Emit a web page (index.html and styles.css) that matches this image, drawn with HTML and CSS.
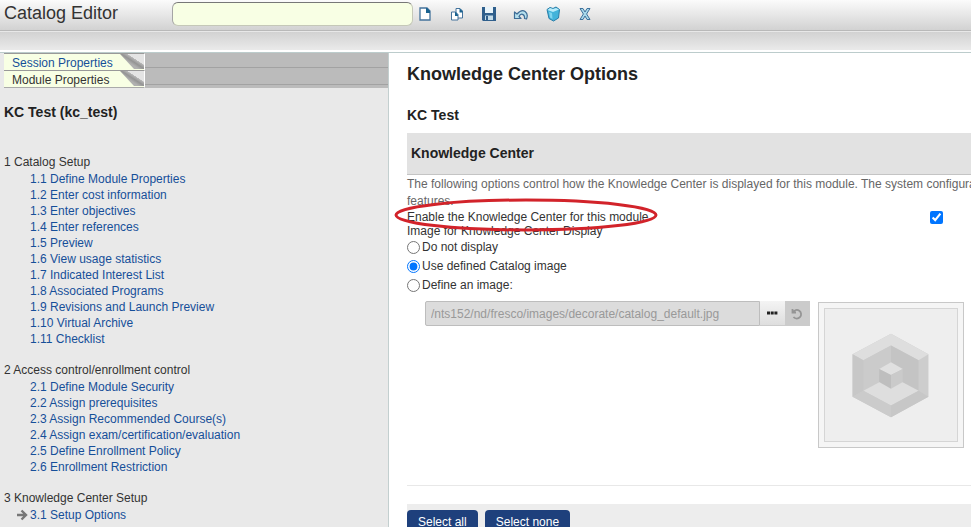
FILE: index.html
```
<!DOCTYPE html>
<html lang="en">
<head>
    <meta charset="UTF-8">
    <meta name="viewport" content="width=device-width, initial-scale=1.0">
    <title>Catalog Editor</title>
    <link rel="stylesheet" href="styles.css">
</head>
<body>
    <header class="toolbar">
        <div class="app-title">Catalog Editor</div>
        <input class="message" type="text" aria-label="Message" readonly>
        <div class="tools">
            <button type="button" aria-label="New">
                <svg viewBox="0 0 16 16"><path d="M3 2h7l3 3v9H3z" fill="#fff" stroke="#44739c" stroke-width="1.3"/><path d="M9 2h1l3 3v2H9z" fill="#1b6390"/></svg>
            </button>
            <button type="button" aria-label="Copy">
                <svg viewBox="0 0 16 16"><path d="M7 2.500h4l2.500 2.500v7H7z" fill="#fff" stroke="#44739c"/><path d="M10.500 2.500h.5L13.500 5v1.500h-3z" fill="#1b6390"/><path d="M2.500 6h4L9 8.500V14H2.500z" fill="#fff" stroke="#44739c"/><path d="M6 6h.5L9 8.500V10H6z" fill="#1b6390"/></svg>
            </button>
            <button type="button" aria-label="Save">
                <svg viewBox="0 0 16 16"><path d="M1 1h14v14H2l-1-1z" fill="#2f5f8c"/><path d="M4 1h8v6H4z" fill="#e9f4fa"/><path d="M4 9.500h8V14H4z" fill="#c4dce9"/><path d="M5 10h2v4H5z" fill="#2f5f8c"/></svg>
            </button>
            <button type="button" aria-label="Undo">
                <svg viewBox="0 0 16 16"><path d="M1.500 6v6.500H8L6 10.500C7.500 7 12 7.500 11.500 12.500l2 .5C16 7 10.500 .500 4 8z" fill="#b5dfed" stroke="#3d6c96" stroke-width="1.200" stroke-linejoin="round"/></svg>
            </button>
            <button type="button" aria-label="Delete">
                <svg viewBox="0 0 16 16"><path d="M2 3.500 5 1.500l3 1 3-1.500 3.500 2.500-1 8.500L8.500 15 4 12.500z" fill="#43b3da" stroke="#287da8"/><path d="M2.500 4 8 6l6-2.500L11 2 8 3 5 2z" fill="#b9ecfa"/><path d="M4 6l3 1 .500 6-2.500-1.500z" fill="#80d5ef"/></svg>
            </button>
            <button type="button" aria-label="Close">
                <svg viewBox="0 0 16 16"><path d="M3 2.500h3L8 6l2-3.500h3L9.600 8l3.400 5.500h-3L8 10l-2 3.500H3L6.400 8z" fill="#a8d8ea" stroke="#3d719c"/></svg>
            </button>
        </div>
    </header>
    <div class="subbar"></div>
    <div class="page">
        <aside class="sidebar">
            <div class="tabs">
                <div class="tab"><a href="#">Session Properties</a></div>
                <div class="tab"><span>Module Properties</span></div>
            </div>
            <h2 class="module-name">KC Test (kc_test)</h2>
            <nav>
                <div class="group">
                    <h3>1 Catalog Setup</h3>
                    <ul>
                        <li><a href="#">1.1 Define Module Properties</a></li>
                        <li><a href="#">1.2 Enter cost information</a></li>
                        <li><a href="#">1.3 Enter objectives</a></li>
                        <li><a href="#">1.4 Enter references</a></li>
                        <li><a href="#">1.5 Preview</a></li>
                        <li><a href="#">1.6 View usage statistics</a></li>
                        <li><a href="#">1.7 Indicated Interest List</a></li>
                        <li><a href="#">1.8 Associated Programs</a></li>
                        <li><a href="#">1.9 Revisions and Launch Preview</a></li>
                        <li><a href="#">1.10 Virtual Archive</a></li>
                        <li><a href="#">1.11 Checklist</a></li>
                    </ul>
                </div>
                <div class="group">
                    <h3>2 Access control/enrollment control</h3>
                    <ul>
                        <li><a href="#">2.1 Define Module Security</a></li>
                        <li><a href="#">2.2 Assign prerequisites</a></li>
                        <li><a href="#">2.3 Assign Recommended Course(s)</a></li>
                        <li><a href="#">2.4 Assign exam/certification/evaluation</a></li>
                        <li><a href="#">2.5 Define Enrollment Policy</a></li>
                        <li><a href="#">2.6 Enrollment Restriction</a></li>
                    </ul>
                </div>
                <div class="group">
                    <h3>3 Knowledge Center Setup</h3>
                    <ul>
                        <li class="current">
                            <svg class="arrow" viewBox="0 0 12 12"><path d="M1 6h9M5.500 1.500 10 6l-4.500 4.500" fill="none" stroke="#777" stroke-width="2.400"/></svg>
                            <a href="#">3.1 Setup Options</a>
                        </li>
                    </ul>
                </div>
            </nav>
        </aside>
        <main class="content">
            <h1>Knowledge Center Options</h1>
            <h2 class="subject">KC Test</h2>
            <h2 class="section-bar">Knowledge Center</h2>
            <form>
                <p class="intro">The following options control how the Knowledge Center is displayed for this module. The system configuration<br>features.</p>
                <div class="enable-row">
                    <label for="enable">Enable the Knowledge Center for this module</label>
                    <input type="checkbox" id="enable" checked>
                    <svg class="marker" viewBox="0 0 264 36" aria-hidden="true"><ellipse cx="132" cy="18" rx="130" ry="15" fill="none" stroke="#d2232a" stroke-width="3"/></svg>
                </div>
                <div class="image-label">Image for Knowledge Center Display</div>
                <div class="choice"><input type="radio" name="image" id="img-none"><label for="img-none">Do not display</label></div>
                <div class="choice"><input type="radio" name="image" id="img-catalog" checked><label for="img-catalog">Use defined Catalog image</label></div>
                <div class="choice"><input type="radio" name="image" id="img-custom"><label for="img-custom">Define an image:</label></div>
                <div class="picker">
                    <input class="path" type="text" aria-label="Image path" value="/nts152/nd/fresco/images/decorate/catalog_default.jpg" disabled>
                    <button class="browse" type="button" aria-label="Browse">
                        <svg viewBox="0 0 12 12"><path d="M1 4.500h3v3H1zM4.700 4.500h3v3h-3zM8.400 4.500h3v3h-3z" fill="#222"/></svg>
                    </button>
                    <button class="reset" type="button" aria-label="Reset" disabled>
                        <svg viewBox="0 0 12 12"><path d="M1.500 1v3.500H5M2 4.200A4.300 4.300 0 1 1 2.500 9" fill="none" stroke="#959595" stroke-width="1.800"/></svg>
                    </button>
                    <div class="preview">
                        <svg viewBox="0 0 134 134">
                            <path d="M67 25 105 46v43L67 110 28 89V46z" fill="#cdcdcd"/>
                            <path d="M67 25 105 46 95 52 67 37 39 52 28 46z" fill="#dedede"/>
                            <path d="M39 52 67 37v45L39 83z" fill="#cbcbcb"/>
                            <path d="M67 37 95 52v31L67 72z" fill="#c4c4c4"/>
                            <path d="M28 46 39 52v31L28 89z" fill="#c7c7c7"/>
                            <path d="M39 83 67 68 95 83 67 98z" fill="#dedede"/>
                            <path d="M67 98v12L28 89l11-6z" fill="#cbcbcb"/>
                            <path d="M67 98v12l38-21-10-6z" fill="#c7c7c7"/>
                            <path d="M55 61 67 54 79 61 67 67z" fill="#e0e0e0"/>
                            <path d="M55 61 67 67v14L55 74z" fill="#bebebe"/>
                            <path d="M67 67 79 61v13L67 81z" fill="#cacaca"/>
                        </svg>
                    </div>
                </div>
                <hr>
                <div class="actions">
                    <button type="button">Select all</button>
                    <button type="button">Select none</button>
                </div>
            </form>
        </main>
    </div>
</body>
</html>
```
FILE: styles.css
```
* {
    box-sizing: border-box;
}
body {
    margin: 0;
    min-height: 100vh;
    display: flex;
    flex-direction: column;
    overflow: hidden;
    font-family: "Liberation Sans", Arial, sans-serif;
    font-size: 12px;
    line-height: 16px;
    color: #333;
    background: #fff;
}
h1, h2, h3, p, ul {
    margin: 0;
    padding: 0;
}
a {
    color: #164f99;
    text-decoration: none;
}
a:hover {
    text-decoration: underline;
}
button {
    padding: 0;
    border: 0;
    font-family: inherit;
    cursor: pointer;
}
svg {
    display: block;
}

/* top bars */
.toolbar {
    display: flex;
    align-items: flex-start;
    height: 31px;
    padding: 2px 4px;
    background: linear-gradient(#fbfbfb, #d2d2d2);
    border-bottom: 1px solid #b9b9b9;
}
.app-title {
    width: 168px;
    font-size: 18px;
    line-height: 22px;
}
.message {
    width: 241px;
    height: 24px;
    padding: 0 6px;
    border: 1px solid #c5c8b8;
    border-top: 1px solid #777;
    border-left: 1px solid #a5a5a5;
    border-radius: 6px;
    background: #f8ffe4;
}
.tools {
    display: flex;
    gap: 12px;
    margin-left: 2px;
    padding-top: 2px;
}
.tools button {
    width: 20px;
    height: 20px;
    padding: 2px;
    background: none;
}
.tools svg {
    width: 16px;
    height: 16px;
}
.subbar {
    height: 21px;
    background: linear-gradient(#d2d2d2, #eaeaea);
    border-top: 1px solid #e8e8e8;
    border-bottom: 2px solid #fff;
}
.page {
    flex: 1;
    display: grid;
    grid-template-columns: 389px minmax(0, 1fr);
    border-top: 1px solid #bccccc;
}

/* left side */
.sidebar {
    background: #e9e9e9;
    border-right: 1px solid #c3cfcf;
}
.tabs {
    margin-left: 4px;
    background: #bbb;
}
.tab {
    height: 17px;
    padding-right: 243px;
    background: linear-gradient(#bbb, #bbb 14px, #a2a2a2 14px, #a2a2a2 15px, #bbb 15px);
}
.tab + .tab {
    height: 18px;
}
.tab a,
.tab span {
    display: block;
    height: 100%;
    padding-left: 8px;
    line-height: 18px;
    border-top: 1px solid #999;
    border-right: 1px solid #fff;
    background: #f8ffe4;
    position: relative;
}
.tab a::after,
.tab span::after {
    content: "";
    position: absolute;
    top: 0;
    right: 0;
    width: 24px;
    height: 15px;
    background: linear-gradient(33deg, #b0b0b0 40%, #949494 52%, #b8b8b8 64%, #e4e4e4 65%);
    clip-path: polygon(0 0, 100% 0, 100% 100%, 14px 100%);
}
.tab span {
    border-bottom: 1px solid #aaa;
}
.module-name {
    margin: 16px 4px 34px;
    font-size: 14px;
    color: #222;
}
.group {
    margin: 0 4px 15px;
}
.group h3 {
    font-size: 12px;
    font-weight: normal;
    line-height: 16px;
    margin-bottom: 1px;
}
.group ul {
    padding-left: 26px;
    list-style: none;
}
.current {
    display: flex;
    align-items: center;
    gap: 2px;
    margin-left: -14px;
}
.arrow {
    width: 12px;
    height: 12px;
}

/* right side */
.content {
    padding: 11px 0 0 18px;
    overflow: hidden;
}
.content h1 {
    font-size: 18px;
    line-height: 20px;
    color: #222;
}
.subject {
    margin: 23px 0 10px;
    font-size: 14px;
    line-height: 16px;
    color: #222;
}
.section-bar {
    padding: 0 4px;
    font-size: 14px;
    line-height: 41px;
    color: #222;
    background: #e2e2e2;
    border-bottom: 1px solid #c4c4c4;
}
.intro {
    padding-top: 1px;
    line-height: 17px;
    white-space: nowrap;
    color: #666;
}
.enable-row {
    display: flex;
    justify-content: space-between;
    padding-right: 28px;
    line-height: 14px;
    position: relative;
}
.enable-row input,
.choice input {
    width: 13px;
    height: 13px;
    margin: 0;
    accent-color: #0075ff;
}
.enable-row input {
    margin-top: 1px;
}
.marker {
    position: absolute;
    top: -13px;
    left: -13px;
    width: 264px;
    height: 36px;
    pointer-events: none;
}
.image-label {
    line-height: 14px;
}
.choice {
    display: flex;
    align-items: center;
    gap: 2px;
    line-height: 19px;
}
.picker {
    display: flex;
    align-items: flex-start;
    margin: 6px 0 37px 18px;
}
.path {
    width: 335px;
    height: 25px;
    padding: 0 5px;
    border: 1px solid #bdbdbd;
    border-radius: 2px 0 0 2px;
    font-family: inherit;
    font-size: 12px;
    color: #999;
    background: #dcdcdc;
}
.picker button {
    width: 25px;
    height: 25px;
    padding: 6px;
    background: #cbcbcb;
}
.picker .browse {
    border-bottom: 1px solid #ccc;
    background: linear-gradient(#f4f4f4, #dedede);
}
.picker svg {
    width: 12px;
    height: 12px;
}
.preview {
    margin: 1px 0 0 8px;
    padding: 5px;
    border: 1px solid #c8c8c8;
    background: #f5f5f5;
}
.picker .preview svg {
    width: 134px;
    height: 134px;
    border: 1px solid #d5d5d5;
    background: #eee;
}
hr {
    margin: 0 0 18px;
    border: 0;
    border-top: 1px solid #e8e8e8;
}
.actions {
    display: flex;
    gap: 7px;
    padding: 6px 0;
    background: #ededed;
}
.actions button {
    padding: 0 11px;
    border-radius: 4px;
    font-size: 12px;
    line-height: 24px;
    color: #fff;
    background: #1e407c;
}
```
